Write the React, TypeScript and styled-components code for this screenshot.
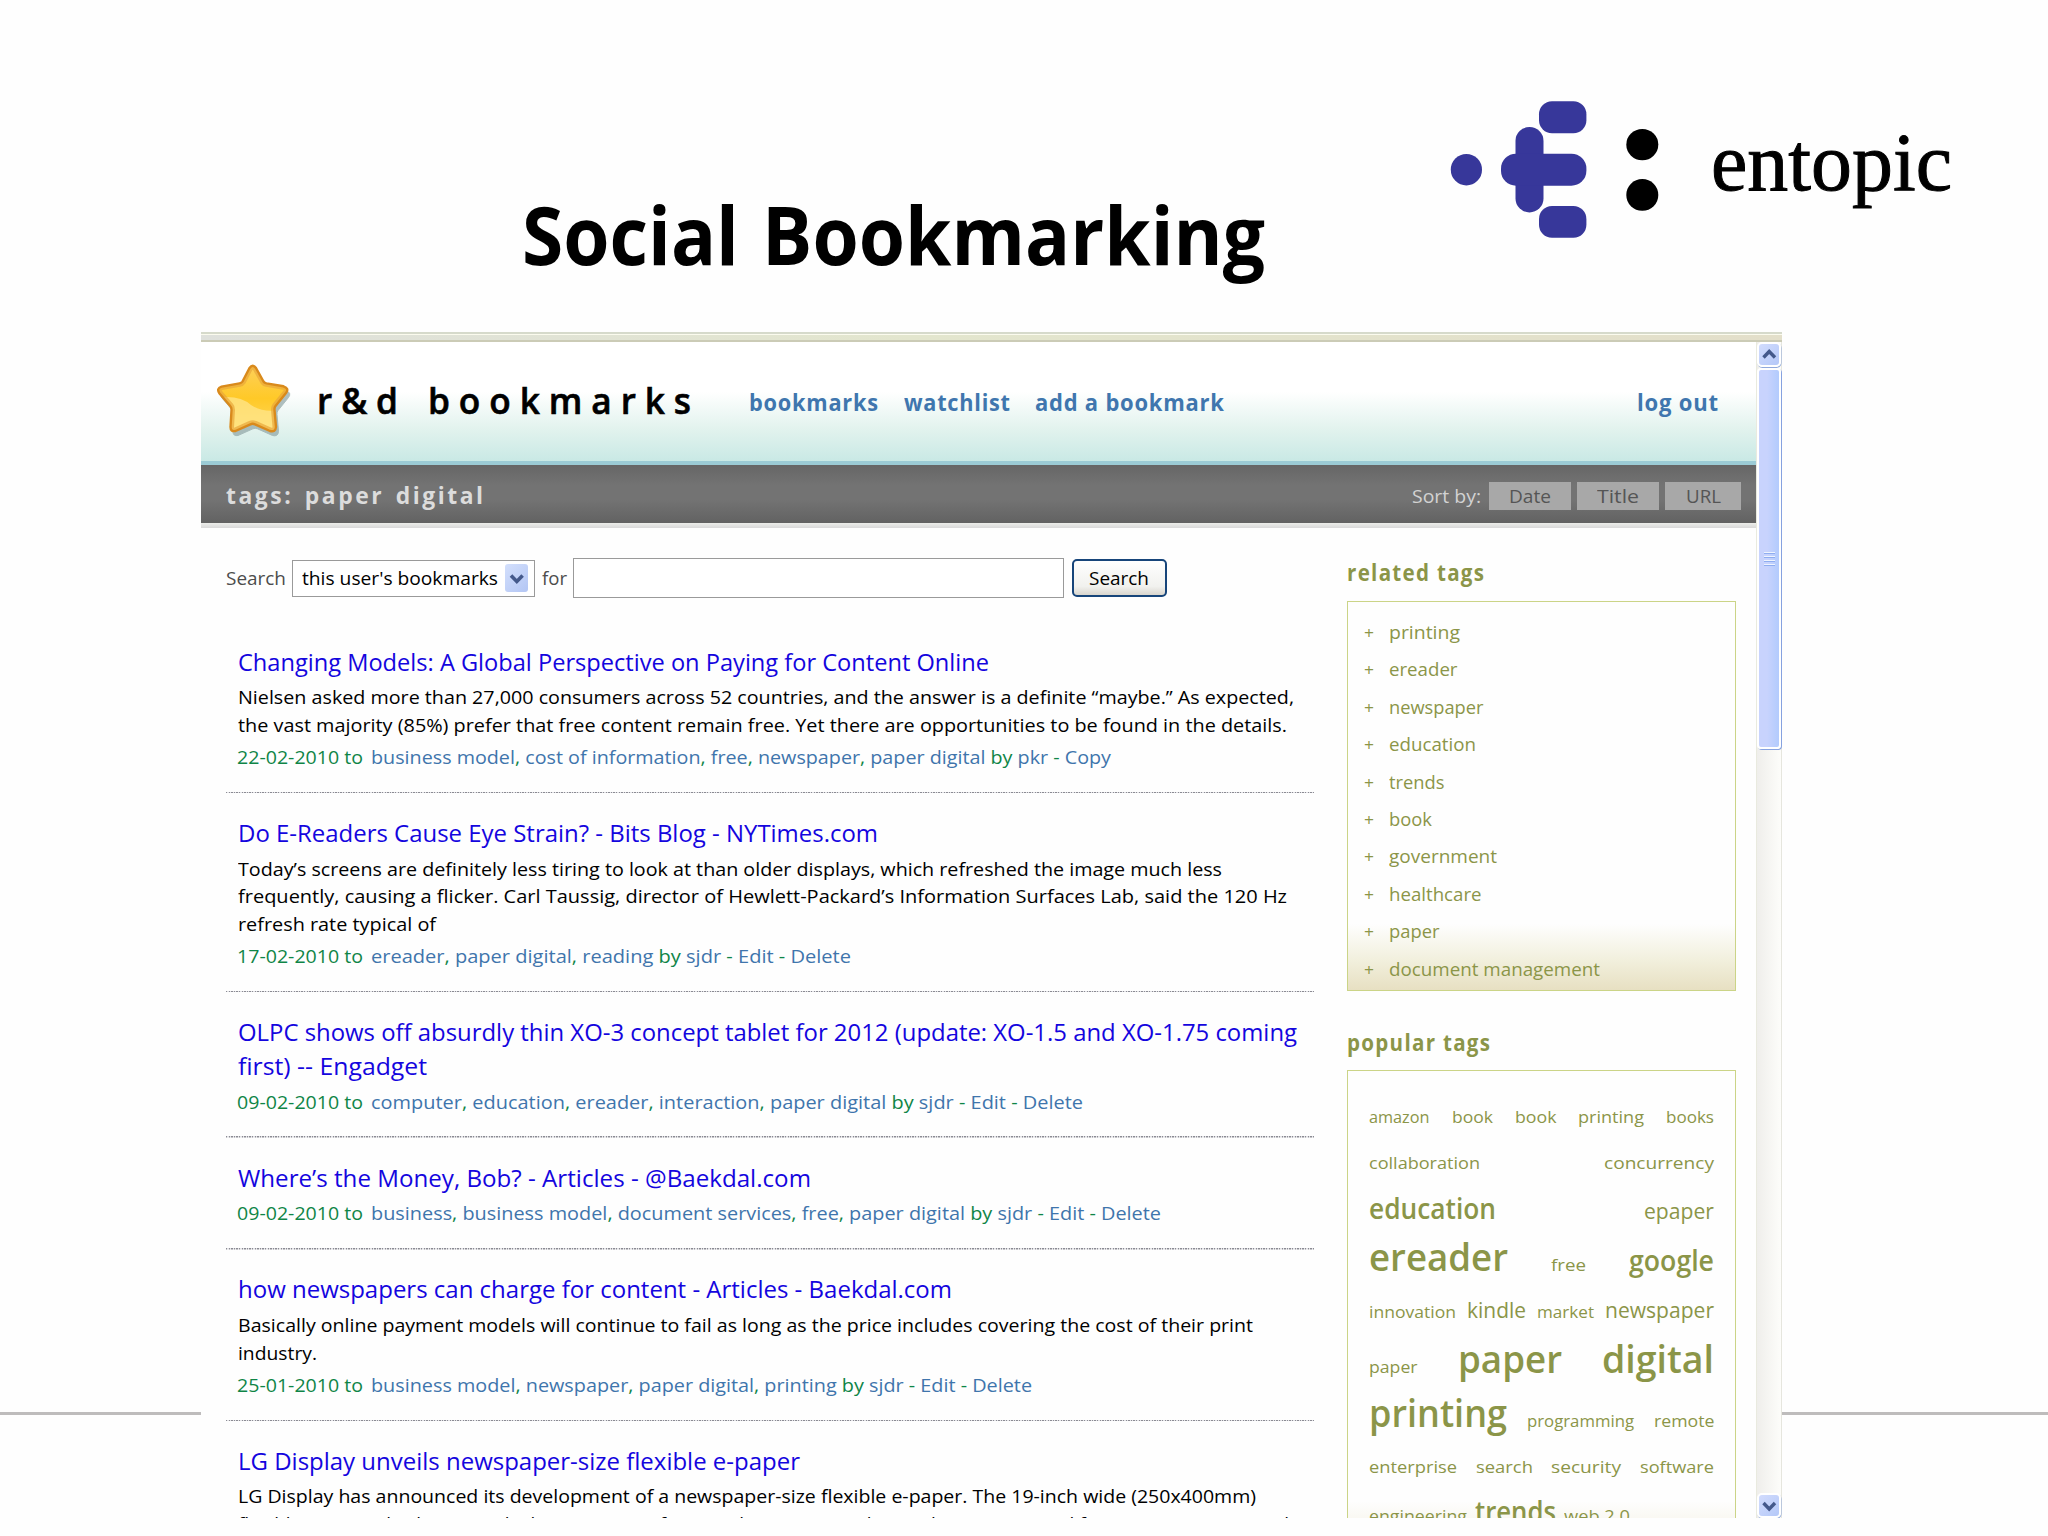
import React, { useLayoutEffect, useRef, useState } from "react";
import styled, { createGlobalStyle, css } from "styled-components";

const GlobalStyle = createGlobalStyle`
  * { box-sizing: border-box; }
  body { margin: 0; background: #fefefe; font-family: "Open Sans", "Noto Sans", sans-serif; }
  p, h1, h2, h3, ul { margin: 0; padding: 0; font-weight: inherit; list-style: none; }
`;

/* ---------- text that keeps a fixed measure ---------- */

const Measure = styled.span<{ $w: number }>`
  display: inline-block;
  width: ${(p) => p.$w}px;
  white-space: pre;
  vertical-align: baseline;
  flex: none;
`;
const Stretch = styled.span`
  display: inline-block;
  transform-origin: 0 50%;
`;

function Fit({ w, children }: { w: number; children: React.ReactNode }) {
  const ref = useRef<HTMLSpanElement>(null);
  const [scale, setScale] = useState(1);
  useLayoutEffect(() => {
    const el = ref.current;
    if (!el) return;
    const spacing = parseFloat(getComputedStyle(el).letterSpacing) || 0;
    setScale(w / (parseFloat(getComputedStyle(el).width) - spacing));
  }, [w]);
  return (
    <Measure $w={w}>
      <Stretch ref={ref} style={{ transform: `scaleX(${scale})` }}>
        {children}
      </Stretch>
    </Measure>
  );
}

/* ---------- slide ---------- */

const Slide = styled.main`
  width: 2048px;
  height: 1536px;
  overflow: hidden;
  background: #fefefe;
`;
const SlideHeader = styled.header`
  height: 332px;
  display: flex;
  align-items: flex-start;
`;
const SlideTitle = styled.h1`
  width: 918px;
  margin: 174px 0 0 522px;
  font-size: 81px;
  line-height: 120px;
  font-weight: 700;
  word-spacing: 4px;
  color: #000;
`;
const LogoMark = styled.svg`
  width: 240px;
  height: 160px;
  margin-top: 90px;
  flex: none;
`;
const LogoText = styled.div`
  margin: 102px 0 0 31px;
  font-family: "Liberation Serif", serif;
  font-size: 83.5px;
  line-height: 120px;
  color: #000;
  -webkit-text-stroke: 1px #000;
`;
const SlideBody = styled.div`
  display: flex;
  height: 1186px;
`;
const Rule = styled.div<{ $w: number }>`
  width: ${(p) => p.$w}px;
  height: 3px;
  margin-top: 1080px;
  background: #bebcbc;
  flex: none;
`;
const Window = styled.section`
  width: 1581px;
  height: 1186px;
  overflow: hidden;
  display: flex;
  flex-direction: column;
  flex: none;
`;
const WindowEdge = styled.div`
  height: 10px;
  flex: none;
  border-top: 2px solid #d6dacb;
  border-bottom: 2px solid #cbcbb6;
  background: linear-gradient(90deg, #dfe1dc, #e3e6ce 45%, #e3dfca);
  box-shadow: inset 0 1px 0 #fbfbee;
`;
const WindowRow = styled.div`
  display: flex;
  flex: 1;
  min-height: 0;
`;
const Page = styled.div`
  width: 1555px;
  overflow: hidden;
`;

/* ---------- banner ---------- */

const Banner = styled.div`
  height: 123px;
  display: flex;
  align-items: flex-start;
  background: linear-gradient(#fff 0, #fff 42%, #e3f3ee 72%, #c9e9e5 100%);
  border-bottom: 4px solid #9bcbd5;
`;
const Star = styled.svg`
  width: 100px;
  height: 100px;
  margin: 8px 0 0 4px;
  flex: none;
`;
const Brand = styled.div`
  margin: 33px 0 0 12px;
  font-size: 35.5px;
  line-height: 50px;
  font-weight: 600;
  letter-spacing: 9px;
  word-spacing: 3px;
  -webkit-text-stroke: 0.6px #000;
  color: #000;
`;
const Nav = styled.nav`
  display: flex;
  gap: 25.5px;
  margin: 40px 0 0 58px;
  font-size: 23px;
  line-height: 40px;
  font-weight: 700;
  letter-spacing: 0.8px;
  color: #3f76ae;
`;
const LogOut = styled(Nav)`
  margin-left: auto;
  margin-right: 38px;
`;

/* ---------- grey tag bar ---------- */

const TagBar = styled.div`
  height: 58px;
  display: flex;
  align-items: center;
  padding: 4px 15px 0 25px;
  background: linear-gradient(#666, #737373 35%, #737373 60%, #626262);
  color: #dcdcdc;
`;
const BarStrip = styled.div`
  height: 5px;
  background: linear-gradient(#ecedea, #d9d9d9);
`;
const TagBarTitle = styled.h2`
  font-size: 22.5px;
  line-height: 40px;
  font-weight: 700;
  letter-spacing: 2.5px;
  word-spacing: 3px;
  margin-right: auto;
`;
const SortBy = styled.div`
  display: flex;
  align-items: center;
  gap: 6px;
  font-size: 18.6px;
  line-height: 28px;
  color: #d2d2d2;
`;
const SortLabel = styled.span`
  margin-right: 2.5px;
`;
const SortButton = styled.span<{ $w: number }>`
  width: ${(p) => p.$w}px;
  height: 28px;
  display: flex;
  justify-content: center;
  background: #a8a8a8;
  color: #555;
`;

/* ---------- columns ---------- */

const Columns = styled.div`
  display: flex;
`;
const Main = styled.div`
  width: 1088px;
  margin-left: 25px;
`;
const SearchRow = styled.div`
  display: flex;
  align-items: center;
  height: 40px;
  margin-top: 30px;
  margin-bottom: 24px;
  font-size: 18.8px;
  line-height: 28px;
  color: #4c4c4c;
`;
const Select = styled.div`
  width: 243px;
  height: 37px;
  margin: 0 7px 0 6px;
  padding: 0 6px 0 9px;
  display: flex;
  align-items: center;
  justify-content: space-between;
  border: 1.5px solid #9a9a9a;
  background: #fff;
  color: #000;
`;
const SelectArrow = styled.svg`
  width: 23px;
  height: 28px;
  border-radius: 3px;
  background: linear-gradient(135deg, #d3dffc, #b3c6f4);
`;
const TextField = styled.div`
  width: 491px;
  height: 40px;
  margin: 0 8px 0 6px;
  border: 1.5px solid #9a9a9a;
  background: #fff;
`;
const SearchButton = styled.div`
  width: 94.5px;
  height: 38px;
  display: flex;
  align-items: center;
  justify-content: center;
  border: 2px solid #17457a;
  border-radius: 5px;
  background: linear-gradient(#fff, #f1f1ee 75%, #d9d6ce);
  color: #000;
`;

const Bookmark = styled.article`
  padding: 22.7px 0 22.2px 12px;
  display: flex;
  flex-direction: column;
  gap: 4.8px;
  background: repeating-linear-gradient(90deg, #8b8b93 0 1.4px, #e2e2e6 1.4px 2.6px) 0 100% / 100% 1.5px no-repeat;
`;
const BookmarkTitle = styled.h3`
  font-size: 23.3px;
  line-height: 34px;
  color: #1405de;
`;
const Description = styled.div`
  padding-top: 0.8px;
  margin-bottom: -1.1px;
  font-size: 19px;
  line-height: 27.6px;
  color: #000;
`;
const Meta = styled.p`
  display: flex;
  gap: 7.5px;
  margin-left: -1px;
  font-size: 18.8px;
  line-height: 28px;
  color: #0f8547;
`;
const Row = styled.span`
  display: block;
`;
const TagLink = styled.span`
  color: #3f75ac;
`;

/* ---------- sidebar ---------- */

const olive = "#8b9548";

const Sidebar = styled.aside`
  width: 389px;
  margin: 25px 0 0 33px;
  color: ${olive};
  flex: none;
`;
const SideHeading = styled.h2`
  font-size: 22.3px;
  line-height: 40px;
  font-weight: 700;
  letter-spacing: 1.4px;
`;
const panel = css`
  border: 1.5px solid #cbd487;
`;
const RelatedPanel = styled.ul`
  ${panel}
  height: 390px;
  margin: 8px 0 32px;
  padding: 12px 0 0 16px;
  background: linear-gradient(transparent 0, transparent 83%, #f2f0de 92%, #e7e0c2 100%);
`;
const RelatedItem = styled.li`
  display: flex;
  align-items: baseline;
  gap: 15px;
  font-size: 18.8px;
  line-height: 37.4px;
`;
const Plus = styled.span`
  font-size: 17px;
`;
const CloudPanel = styled.div`
  ${panel}
  height: 520px;
  margin-top: 7px;
  padding: 25.6px 21px 0 21px;
  background: linear-gradient(transparent 430px, #ece7cf 500px);
`;
const CloudRow = styled.div<{ $h: number; $left?: boolean }>`
  display: flex;
  align-items: baseline;
  justify-content: ${(p) => (p.$left ? "flex-start" : "space-between")};
  gap: ${(p) => (p.$left ? 8 : 0)}px;
  height: ${(p) => p.$h}px;
`;
const cloudSizes = { s: 17.2, m: 22, l: 28, xl: 38 };
type CloudSize = keyof typeof cloudSizes;
const CloudTag = styled.span<{ $size: CloudSize }>`
  font-size: ${(p) => cloudSizes[p.$size]}px;
  font-weight: ${(p) => (p.$size === "l" || p.$size === "xl" ? 600 : 400)};
  line-height: 40px;
`;

/* ---------- scrollbar ---------- */

const Scrollbar = styled.div`
  width: 26px;
  display: flex;
  flex-direction: column;
  align-items: center;
  border-left: 1px solid #e9eadf;
  border-right: 1px solid #e6e6de;
  background: linear-gradient(90deg, #efeeeb, #fdfdfa);
`;
const ScrollArrow = styled.svg`
  width: 24px;
  height: 25px;
  flex: none;
  border: 2px solid #fff;
  border-radius: 5px;
  background: linear-gradient(135deg, #d2dcfd, #b4c8f8);
  box-shadow: 0.5px 1px 0 #90a9dc;
`;
const Thumb = styled.div`
  width: 24px;
  height: 381px;
  margin: 1px 0 auto;
  display: flex;
  flex-direction: column;
  align-items: center;
  justify-content: center;
  gap: 2px;
  border: 2px solid #fff;
  border-radius: 4px;
  background: linear-gradient(90deg, #c8d3fd 0 40%, #b2cbfd);
  box-shadow: 1px 1px 0 #86a2e0;
`;
const Grip = styled.i`
  width: 11px;
  height: 2px;
  background: #eef4fe;
  border-bottom: 1px solid #8fadf0;
`;

/* ---------- data ---------- */

type Line = [string, number];
interface Entry {
  title: Line[];
  text: Line[];
  meta?: { date: string; tags: string[]; user: string; actions: string[]; width: number };
}

const entries: Entry[] = [
  {
    title: [["Changing Models: A Global Perspective on Paying for Content Online", 751]],
    text: [
      ["Nielsen asked more than 27,000 consumers across 52 countries, and the answer is a definite “maybe.” As expected,", 1056],
      ["the vast majority (85%) prefer that free content remain free. Yet there are opportunities to be found in the details.", 1049],
    ],
    meta: {
      date: "22-02-2010",
      tags: ["business model", "cost of information", "free", "newspaper", "paper digital"],
      user: "pkr",
      actions: ["Copy"],
      width: 740,
    },
  },
  {
    title: [["Do E-Readers Cause Eye Strain? - Bits Blog - NYTimes.com", 640]],
    text: [
      ["Today’s screens are definitely less tiring to look at than older displays, which refreshed the image much less", 984],
      ["frequently, causing a flicker. Carl Taussig, director of Hewlett-Packard’s Information Surfaces Lab, said the 120 Hz", 1049],
      ["refresh rate typical of", 198],
    ],
    meta: { date: "17-02-2010", tags: ["ereader", "paper digital", "reading"], user: "sjdr", actions: ["Edit", "Delete"], width: 480 },
  },
  {
    title: [
      ["OLPC shows off absurdly thin XO-3 concept tablet for 2012 (update: XO-1.5 and XO-1.75 coming", 1059],
      ["first) -- Engadget", 189],
    ],
    text: [],
    meta: {
      date: "09-02-2010",
      tags: ["computer", "education", "ereader", "interaction", "paper digital"],
      user: "sjdr",
      actions: ["Edit", "Delete"],
      width: 712,
    },
  },
  {
    title: [["Where’s the Money, Bob? - Articles - @Baekdal.com", 573]],
    text: [],
    meta: {
      date: "09-02-2010",
      tags: ["business", "business model", "document services", "free", "paper digital"],
      user: "sjdr",
      actions: ["Edit", "Delete"],
      width: 790,
    },
  },
  {
    title: [["how newspapers can charge for content - Articles - Baekdal.com", 714]],
    text: [
      ["Basically online payment models will continue to fail as long as the price includes covering the cost of their print", 1015],
      ["industry.", 79],
    ],
    meta: {
      date: "25-01-2010",
      tags: ["business model", "newspaper", "paper digital", "printing"],
      user: "sjdr",
      actions: ["Edit", "Delete"],
      width: 661,
    },
  },
  {
    title: [["LG Display unveils newspaper-size flexible e-paper", 562]],
    text: [
      ["LG Display has announced its development of a newspaper-size flexible e-paper. The 19-inch wide (250x400mm)", 1018],
      ["flexible e-paper display is nearly the same size of A3-sized newspaper. The product is optimized for an e-newspaper and", 1051],
    ],
  },
];

const related: Line[] = [
  ["printing", 71],
  ["ereader", 68.5],
  ["newspaper", 94.5],
  ["education", 87],
  ["trends", 55.5],
  ["book", 43],
  ["government", 108],
  ["healthcare", 92.5],
  ["paper", 50.5],
  ["document management", 211],
];

type CloudWord = [string, number, CloudSize];
const cloud: { h: number; left?: boolean; words: CloudWord[] }[] = [
  { h: 46.3, words: [["amazon", 60.5, "s"], ["book", 41, "s"], ["book", 41.5, "s"], ["printing", 66, "s"], ["books", 48, "s"]] },
  { h: 45.2, words: [["collaboration", 111, "s"], ["concurrency", 110, "s"]] },
  { h: 48, words: [["education", 127, "l"], ["epaper", 70, "m"]] },
  { h: 53, words: [["ereader", 139, "xl"], ["free", 35, "s"], ["google", 85, "l"]] },
  { h: 48.9, words: [["innovation", 87, "s"], ["kindle", 59, "m"], ["market", 57, "s"], ["newspaper", 109, "m"]] },
  { h: 54.2, words: [["paper", 48.5, "s"], ["paper", 104, "xl"], ["digital", 112, "xl"]] },
  { h: 54.8, words: [["printing", 138, "xl"], ["programming", 107, "s"], ["remote", 60.5, "s"]] },
  { h: 44.4, words: [["enterprise", 88, "s"], ["search", 57, "s"], ["security", 70, "s"], ["software", 74, "s"]] },
  { h: 45, left: true, words: [["engineering", 98, "s"], ["trends", 81, "l"], ["web 2.0", 66, "s"]] },
];

/* ---------- pieces ---------- */

const Lines = ({ lines }: { lines: Line[] }) => (
  <>
    {lines.map(([t, w]) => (
      <Row key={t}>
        <Fit w={w}>{t}</Fit>
      </Row>
    ))}
  </>
);

const BookmarkEntry = ({ e }: { e: Entry }) => (
  <Bookmark>
    <BookmarkTitle>
      <Lines lines={e.title} />
    </BookmarkTitle>
    {e.text.length > 0 && (
      <Description>
        <Lines lines={e.text} />
      </Description>
    )}
    {e.meta && (
      <Meta>
        <Fit w={126}>{e.meta.date} to</Fit>
        <Fit w={e.meta.width}>
          {e.meta.tags.map((t, i) => (
            <React.Fragment key={t}>
              {i > 0 && ", "}
              <TagLink>{t}</TagLink>
            </React.Fragment>
          ))}
          {" by "}
          <TagLink>{e.meta.user}</TagLink>
          {e.meta.actions.map((a) => (
            <React.Fragment key={a}>
              {" - "}
              <TagLink>{a}</TagLink>
            </React.Fragment>
          ))}
        </Fit>
      </Meta>
    )}
  </Bookmark>
);

const starPath =
  "M44.5 18 Q47.7 13.5 51 18 L58.5 31.5 Q59.5 33 61.5 33.4 L78.5 36.3 Q84.5 38.3 81 43 L70.5 56 Q69.3 57.5 69.5 60 L71 77 Q70.5 82.5 65 81 L50 74.3 Q47.7 73.3 45.4 74.3 L30.5 81 Q25.5 82 25.5 77 L26.5 60 Q26.6 57.5 25.2 56 L14.5 43.5 Q11 38.5 16.5 36.6 L34.5 33.4 Q36.6 33 37.5 31.5 Z";

export default function App() {
  return (
    <Slide>
      <GlobalStyle />
      <SlideHeader>
        <SlideTitle>
          <Fit w={743}>Social Bookmarking</Fit>
        </SlideTitle>
        <LogoMark viewBox="0 0 240 160">
          <g fill="#37379a">
            <ellipse cx="26.4" cy="79.7" rx="15.6" ry="15.8" />
            <rect x="99" y="11.3" width="47.4" height="31.9" rx="13" />
            <rect x="99" y="116" width="47.4" height="31.8" rx="13" />
            <rect x="75.5" y="37" width="28" height="85.4" rx="14" />
            <rect x="61" y="63.7" width="85.4" height="32" rx="15" />
          </g>
          <ellipse cx="202.3" cy="54.6" rx="16" ry="15.7" />
          <ellipse cx="202.3" cy="104.9" rx="16" ry="15.9" />
        </LogoMark>
        <LogoText>
          <Fit w={241}>entopic</Fit>
        </LogoText>
      </SlideHeader>

      <SlideBody>
        <Rule $w={201} />
        <Window>
          <WindowEdge />
          <WindowRow>
            <Page>
              <Banner>
                <Star viewBox="0 0 100 100">
                  <defs>
                    <linearGradient id="gold" x1="0" y1="0" x2="0" y2="1">
                      <stop offset="0" stopColor="#fdd05a" />
                      <stop offset="0.5" stopColor="#ffc927" />
                      <stop offset="1" stopColor="#ffd95e" />
                    </linearGradient>
                    <clipPath id="starClip">
                      <path d={starPath} />
                    </clipPath>
                  </defs>
                  <path d={starPath} transform="translate(2.5 4.5)" fill="#8fa5a5" opacity="0.7" stroke="#8fa5a5" strokeWidth="1" />
                  <path d={starPath} fill="url(#gold)" />
                  <g clipPath="url(#starClip)">
                    <path d="M10 48 Q34 44 46 55 Q58 63 74 60 L74 90 L20 90 Z" fill="#ffe68c" opacity="0.75" />
                    <path d={starPath} fill="none" stroke="#e8a63a" strokeWidth="7" opacity="0.7" />
                  </g>
                  <path d={starPath} fill="none" stroke="#d98a1c" strokeWidth="2.4" strokeLinejoin="round" />
                </Star>
                <Brand>
                  <Fit w={374}>r&amp;d bookmarks</Fit>
                </Brand>
                <Nav>
                  <Fit w={129}>bookmarks</Fit>
                  <Fit w={106}>watchlist</Fit>
                  <Fit w={189}>add a bookmark</Fit>
                </Nav>
                <LogOut>
                  <Fit w={81}>log out</Fit>
                </LogOut>
              </Banner>
              <TagBar>
                <TagBarTitle>
                  <Fit w={257}>tags: paper digital</Fit>
                </TagBarTitle>
                <SortBy>
                  <SortLabel>
                    <Fit w={69}>Sort by:</Fit>
                  </SortLabel>
                  <SortButton $w={82}>
                    <Fit w={42}>Date</Fit>
                  </SortButton>
                  <SortButton $w={82}>
                    <Fit w={42}>Title</Fit>
                  </SortButton>
                  <SortButton $w={76}>
                    <Fit w={35}>URL</Fit>
                  </SortButton>
                </SortBy>
              </TagBar>
              <BarStrip />
              <Columns>
                <Main>
                  <SearchRow>
                    <Fit w={60}>Search</Fit>
                    <Select>
                      <Fit w={196}>this user's bookmarks</Fit>
                      <SelectArrow viewBox="0 0 23 28">
                        <path d="M6 11.5 L11.8 17.5 L17.6 11.5" fill="none" stroke="#44598b" strokeWidth="3.6" />
                      </SelectArrow>
                    </Select>
                    <Fit w={25}>for</Fit>
                    <TextField />
                    <SearchButton>
                      <Fit w={60}>Search</Fit>
                    </SearchButton>
                  </SearchRow>
                  {entries.map((e) => (
                    <BookmarkEntry key={e.title[0][0]} e={e} />
                  ))}
                </Main>
                <Sidebar>
                  <SideHeading>
                    <Fit w={137}>related tags</Fit>
                  </SideHeading>
                  <RelatedPanel>
                    {related.map(([t, w]) => (
                      <RelatedItem key={t}>
                        <Plus>
                          <Fit w={10}>+</Fit>
                        </Plus>
                        <Fit w={w}>{t}</Fit>
                      </RelatedItem>
                    ))}
                  </RelatedPanel>
                  <SideHeading>
                    <Fit w={143}>popular tags</Fit>
                  </SideHeading>
                  <CloudPanel>
                    {cloud.map((r, i) => (
                      <CloudRow key={i} $h={r.h} $left={r.left}>
                        {r.words.map(([t, w, s], j) => (
                          <CloudTag key={j} $size={s}>
                            <Fit w={w}>{t}</Fit>
                          </CloudTag>
                        ))}
                      </CloudRow>
                    ))}
                  </CloudPanel>
                </Sidebar>
              </Columns>
            </Page>
            <Scrollbar>
              <ScrollArrow viewBox="0 0 20 21">
                <path d="M4.5 13.5 L10.2 7.5 L16 13.5" fill="none" stroke="#44598b" strokeWidth="3.4" />
              </ScrollArrow>
              <Thumb>
                <Grip />
                <Grip />
                <Grip />
                <Grip />
              </Thumb>
              <ScrollArrow viewBox="0 0 20 21">
                <path d="M4.5 8 L10.2 14 L16 8" fill="none" stroke="#44598b" strokeWidth="3.4" />
              </ScrollArrow>
            </Scrollbar>
          </WindowRow>
        </Window>
        <Rule $w={266} />
      </SlideBody>
    </Slide>
  );
}
